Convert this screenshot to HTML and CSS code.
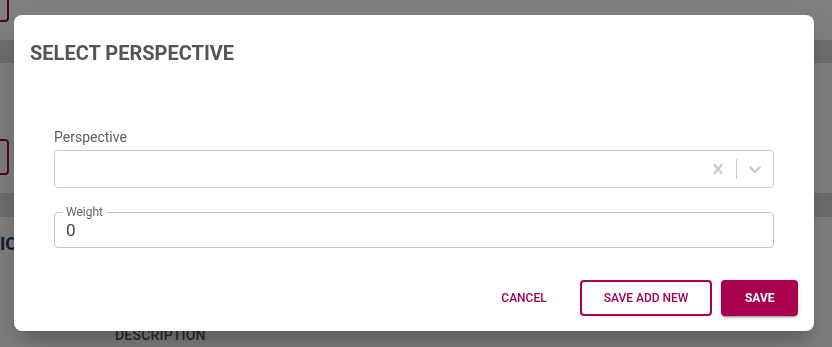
FILE: index.html
```html
<!DOCTYPE html>
<html lang="en">
<head>
<meta charset="utf-8">
<title>Select Perspective</title>
<link rel="stylesheet" href="styles.css">
</head>
<body>
<div class="page">
  <div class="toolbar"><button class="page-btn page-btn-top" aria-label="Add"></button></div>
  <div class="band"></div>
  <div class="section"><button class="page-btn page-btn-mid" aria-label="Edit"></button></div>
  <div class="band band-2"></div>
  <div class="heading">IO</div>
  <div class="col-head">DESCRIPTION</div>
</div>

<div class="overlay">
  <div class="dialog" role="dialog" aria-labelledby="dlg-title">
    <h2 class="dialog-title" id="dlg-title">SELECT PERSPECTIVE</h2>

    <label class="field-label">Perspective</label>
    <div class="select">
      <div class="select-value"></div>
      <div class="select-indicators">
        <span class="indicator">
          <svg viewBox="0 0 20 20" width="20" height="20" aria-hidden="true"><path fill="currentColor" d="M14.348 14.849c-0.469 0.469-1.229 0.469-1.697 0l-2.651-3.030-2.651 3.029c-0.469 0.469-1.229 0.469-1.697 0-0.469-0.469-0.469-1.229 0-1.697l2.758-3.15-2.759-3.152c-0.469-0.469-0.469-1.228 0-1.697s1.228-0.469 1.697 0l2.652 3.031 2.651-3.031c0.469-0.469 1.228-0.469 1.697 0s0.469 1.229 0 1.697l-2.758 3.152 2.758 3.15c0.469 0.469 0.469 1.229 0 1.698z"/></svg>
        </span>
        <span class="separator"></span>
        <span class="indicator">
          <svg viewBox="0 0 20 20" width="20" height="20" aria-hidden="true"><path fill="currentColor" d="M4.516 7.548c0.436-0.446 1.043-0.481 1.576 0l3.908 3.747 3.908-3.747c0.533-0.481 1.141-0.446 1.574 0 0.436 0.445 0.408 1.197 0 1.615-0.406 0.418-4.695 4.502-4.695 4.502-0.217 0.223-0.502 0.335-0.787 0.335s-0.57-0.112-0.789-0.335c0 0-4.287-4.084-4.695-4.502s-0.436-1.17 0-1.615z"/></svg>
        </span>
      </div>
    </div>

    <fieldset class="outlined">
      <legend class="outlined-label">Weight</legend>
      <input class="outlined-input" type="text" value="0">
    </fieldset>

    <div class="actions">
      <button class="btn btn-text">CANCEL</button>
      <button class="btn btn-outline">SAVE ADD NEW</button>
      <button class="btn btn-filled">SAVE</button>
    </div>
  </div>
</div>
</body>
</html>
```

FILE: styles.css
```css
* { box-sizing: border-box; }

html, body {
  margin: 0;
  height: 347px;
  overflow: hidden;
}

body {
  font-family: Roboto, "Liberation Sans", Arial, sans-serif;
  background: #ffffff;
}

/* ---------- underlying page ---------- */
.page {
  width: 832px;
}

.toolbar {
  display: flow-root;
  height: 40px;
}

.page-btn {
  display: block;
  height: 36px;
  width: 100px;
  border: 2px solid #a8004f;
  border-radius: 4px;
  background: #ffffff;
}

.page-btn-top {
  margin: -14px 0 0 -91px;
}

.band {
  height: 23px;
  background: #dcdcdc;
}

.band-2 {
  height: 24px;
}

.section {
  display: flow-root;
  height: 130px;
  padding-top: 76px;
}

.page-btn-mid {
  margin-left: -91px;
}

.heading {
  margin: 16px 0 0 0;
  font: 700 18px/22px Roboto, sans-serif;
  color: #163a6e;
}

.col-head {
  margin-top: 72px;
  padding-left: 115px;
  font: 500 14px/16px Roboto, sans-serif;
  letter-spacing: 0.2px;
  color: #555555;
}

/* ---------- overlay + dialog ---------- */
.overlay {
  position: fixed;
  inset: 0;
  background: rgba(0, 0, 0, 0.5);
  display: flex;
  align-items: flex-start;
  padding: 15px 0 0 14px;
}

.dialog {
  width: 800px;
  height: 316px;
  background: #ffffff;
  border-radius: 8px;
  box-shadow: 0 11px 15px -7px rgba(0,0,0,0.2), 0 24px 38px 3px rgba(0,0,0,0.14);
  padding: 26px 16px 15px 16px;
  display: flex;
  flex-direction: column;
}

.dialog-title {
  margin: 0;
  font: 700 20px/24px Roboto, sans-serif;
  color: #555555;
}

.field-label {
  display: block;
  margin: 62px 24px 3px 24px;
  font: 400 14px/20px Roboto, sans-serif;
  color: #5f5f5f;
}

.select {
  margin: 0 24px;
  height: 38px;
  border: 1px solid #cccccc;
  border-radius: 4px;
  display: flex;
  align-items: stretch;
}

.select-value {
  flex: 1;
}

.select-indicators {
  display: flex;
  align-items: center;
  color: #cccccc;
}

.indicator {
  display: flex;
  padding: 8px;
}

.separator {
  align-self: stretch;
  width: 1px;
  margin: 8px 0;
  background: #cccccc;
}

.outlined {
  margin: 17px 24px 0 24px;
  padding: 1px 8px 7px 8px;
  border: 1px solid #c4c4c4;
  border-radius: 4px;
  min-width: 0;
}

.outlined-label {
  padding: 0 3px;
  font: 400 12px/14px Roboto, sans-serif;
  color: #666666;
}

.outlined-input {
  display: block;
  width: 100%;
  height: 20px;
  padding: 0 3px;
  border: none;
  outline: none;
  background: transparent;
  font: 400 17px/20px Roboto, sans-serif;
  color: #444444;
}

.actions {
  margin-top: 32px;
  display: flex;
  justify-content: flex-end;
  gap: 9px;
}

.btn {
  height: 36px;
  padding: 0 22px;
  border: 2px solid transparent;
  border-radius: 4px;
  background: transparent;
  font: 500 12px/1 Roboto, sans-serif;
  letter-spacing: 0;
  color: #a8004f;
  cursor: pointer;
}

.btn-outline {
  border-color: #a8004f;
  background: #ffffff;
}

.btn-filled {
  padding: 0 21.5px;
  background: #a8004f;
  border-color: #a8004f;
  color: #ffffff;
  font-weight: 700;
  box-shadow: 0 3px 1px -2px rgba(0,0,0,0.2), 0 2px 2px 0 rgba(0,0,0,0.14), 0 1px 5px 0 rgba(0,0,0,0.12);
}
```
